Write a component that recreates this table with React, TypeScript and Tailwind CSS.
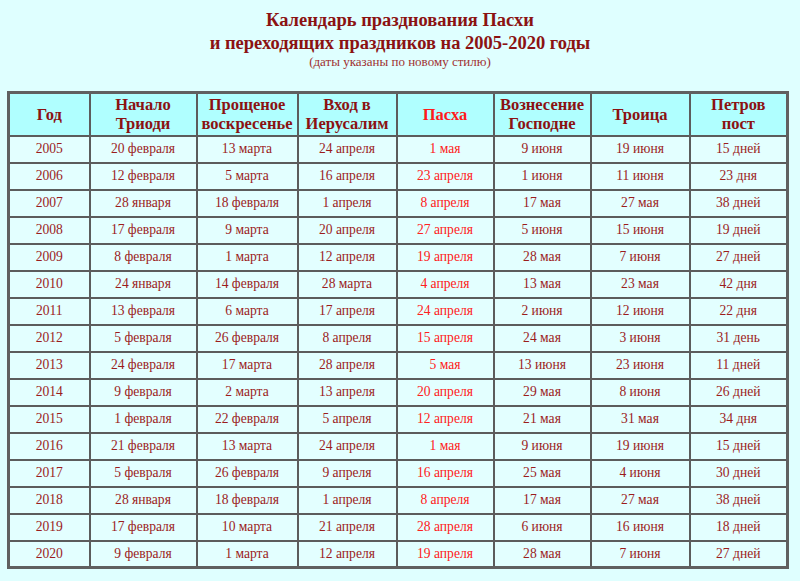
import React from "react";

const rows: string[][] = [
  ["2005", "20 февраля", "13 марта", "24 апреля", "1 мая", "9 июня", "19 июня", "15 дней"],
  ["2006", "12 февраля", "5 марта", "16 апреля", "23 апреля", "1 июня", "11 июня", "23 дня"],
  ["2007", "28 января", "18 февраля", "1 апреля", "8 апреля", "17 мая", "27 мая", "38 дней"],
  ["2008", "17 февраля", "9 марта", "20 апреля", "27 апреля", "5 июня", "15 июня", "19 дней"],
  ["2009", "8 февраля", "1 марта", "12 апреля", "19 апреля", "28 мая", "7 июня", "27 дней"],
  ["2010", "24 января", "14 февраля", "28 марта", "4 апреля", "13 мая", "23 мая", "42 дня"],
  ["2011", "13 февраля", "6 марта", "17 апреля", "24 апреля", "2 июня", "12 июня", "22 дня"],
  ["2012", "5 февраля", "26 февраля", "8 апреля", "15 апреля", "24 мая", "3 июня", "31 день"],
  ["2013", "24 февраля", "17 марта", "28 апреля", "5 мая", "13 июня", "23 июня", "11 дней"],
  ["2014", "9 февраля", "2 марта", "13 апреля", "20 апреля", "29 мая", "8 июня", "26 дней"],
  ["2015", "1 февраля", "22 февраля", "5 апреля", "12 апреля", "21 мая", "31 мая", "34 дня"],
  ["2016", "21 февраля", "13 марта", "24 апреля", "1 мая", "9 июня", "19 июня", "15 дней"],
  ["2017", "5 февраля", "26 февраля", "9 апреля", "16 апреля", "25 мая", "4 июня", "30 дней"],
  ["2018", "28 января", "18 февраля", "1 апреля", "8 апреля", "17 мая", "27 мая", "38 дней"],
  ["2019", "17 февраля", "10 марта", "21 апреля", "28 апреля", "6 июня", "16 июня", "18 дней"],
  ["2020", "9 февраля", "1 марта", "12 апреля", "19 апреля", "28 мая", "7 июня", "27 дней"],
];

const widths = ["w-[81px]", "w-[107px]", "w-[101px]", "w-[99px]", "w-[97px]", "w-[97px]", "w-[99px]", "w-[98px]"];

const headers: React.ReactNode[] = [
  "Год",
  <>Начало<br />Триоди</>,
  <>Прощеное<br />воскресенье</>,
  <>Вход в<br />Иерусалим</>,
  "Пасха",
  <>Вознесение<br />Господне</>,
  "Троица",
  <>Петров<br />пост</>,
];

export default function App() {
  return (
    <div
      className="min-h-[581px] w-[800px] bg-[#dfffff] text-[#8b1a1a]"
      style={{ fontFamily: '"Liberation Serif", "Times New Roman", serif' }}
    >
      <div className="flex flex-col items-center pt-[9px]">
        <div className="text-[18.5px] font-bold leading-[23px] text-[#8b1212] text-center">
          Календарь празднования Пасхи
          <br />
          и переходящих праздников на 2005-2020 годы
        </div>
        <div className="text-[13px] leading-[16px] text-[#a03030] -mt-[1px]">
          (даты указаны по новому стилю)
        </div>
      </div>
      <div className="pl-[7px] pt-[21px]">
        <table className="border-collapse border-[3px] border-[#606060] table-fixed w-[780px]">
          <thead>
            <tr className="bg-[#b0ffff] h-[43px]">
              {headers.map((h, i) => (
                <th
                  key={i}
                  className={`${widths[i]} border-[2px] border-[#5c5c5c] p-0 text-[16.5px] leading-[19px] font-bold text-center ${
                    i === 4 ? "text-[#ff1a1a]" : "text-[#8b1212]"
                  }`}
                >
                  {h}
                </th>
              ))}
            </tr>
          </thead>
          <tbody>
            {rows.map((r) => (
              <tr key={r[0]} className="h-[27px] bg-[#e3ffff]">
                {r.map((c, i) => (
                  <td
                    key={i}
                    className={`border-[2px] border-[#5c5c5c] p-0 text-[13.6px] leading-[16px] text-center ${
                      i === 4 ? "text-[#ff2020]" : "text-[#9b1c1c]"
                    }`}
                  >
                    {c}
                  </td>
                ))}
              </tr>
            ))}
          </tbody>
        </table>
      </div>
    </div>
  );
}
